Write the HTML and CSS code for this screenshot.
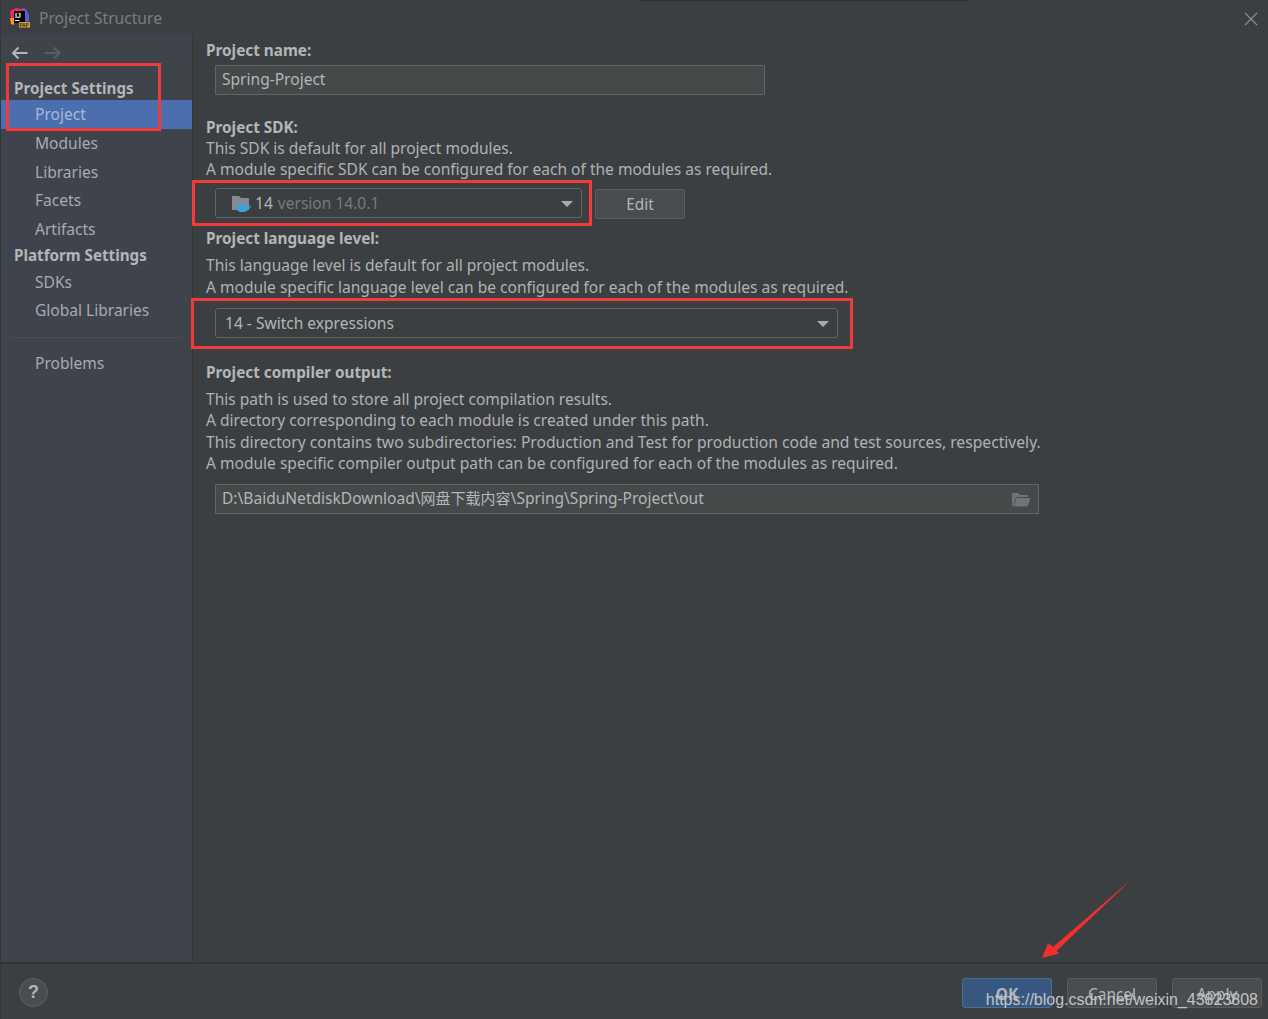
FILE: index.html
```html
<!DOCTYPE html>
<html lang="en">
<head>
<meta charset="utf-8">
<title>Project Structure</title>
<link rel="stylesheet" href="styles.css">
</head>
<body>
<div class="dialog">
  <header class="titlebar">
    <svg class="app-icon" width="22" height="22" viewBox="0 0 22 22">
      <path d="M1 5 L7 2 L13 3 L15 7 L5 15 L2 13 Z" fill="#f0246b"/>
      <path d="M13 2 L17 3 L20 9 L20 15 L15 16 Z" fill="#5b5fe0"/>
      <path d="M1 12 L5 12 L5 19 L2 18 Z" fill="#f89a1c"/>
      <rect x="5" y="5" width="11" height="12" fill="#000"/>
      <text x="6" y="11.500" class="app-icon-text">IJ</text>
      <rect x="6" y="14" width="4.500" height="1" fill="#fff"/>
      <rect x="10" y="16" width="11" height="5.500" fill="#d9a53c"/>
      <text x="10.500" y="20.800" class="app-icon-pap">PAP</text>
    </svg>
    <span class="title">Project Structure</span>
    <svg class="close" width="14" height="14" viewBox="0 0 14 14"><path d="M1 1 L13 13 M13 1 L1 13" stroke="#8d9092" stroke-width="1.1" fill="none"/></svg>
  </header>
  <div class="shadow-top"></div>
  <div class="body">
    <aside class="sidebar">
      <div class="nav-arrows">
        <svg width="18" height="14" viewBox="0 0 18 14"><path d="M16.500 7 H2 M7.500 1.500 L2 7 L7.500 12.500" stroke="#b4b6b8" stroke-width="2" fill="none"/></svg>
        <svg width="18" height="14" viewBox="0 0 18 14"><path d="M1 7 H15.500 M10 1.500 L15.500 7 L10 12.500" stroke="#5b5e60" stroke-width="2" fill="none"/></svg>
      </div>
      <div class="nav-head first">Project Settings</div>
      <div class="nav-item active">Project</div>
      <div class="nav-item">Modules</div>
      <div class="nav-item">Libraries</div>
      <div class="nav-item">Facets</div>
      <div class="nav-item">Artifacts</div>
      <div class="nav-head second">Platform Settings</div>
      <div class="nav-item compact">SDKs</div>
      <div class="nav-item compact">Global Libraries</div>
      <div class="nav-sep"></div>
      <div class="nav-item compact">Problems</div>
    </aside>
    <main class="content">
      <div class="label">Project name:</div>
      <div class="field name-field">Spring-Project</div>

      <div class="label sdk-label">Project SDK:</div>
      <p class="line">This SDK is default for all project modules.</p>
      <p class="line">A module specific SDK can be configured for each of the modules as required.</p>
      <div class="sdk-row">
        <div class="combo sdk-combo">
          <svg class="jdk-icon" width="20" height="18" viewBox="0 0 20 18">
            <path d="M1 1 H8 L10 3 H18 V15 H1 Z" fill="#828b93"/>
            <path d="M6 10 H17 V13 Q17 17 13 17 H10 Q6 17 6 13 Z" fill="#3aa3d8"/>
            <path d="M17 11 H19 V13 H17" stroke="#3aa3d8" fill="none"/>
          </svg>
          <span class="sdk-name">14</span><span class="sdk-version">version 14.0.1</span>
          <span class="caret"></span>
        </div>
        <div class="btn edit-btn">Edit</div>
      </div>

      <div class="label lang-label">Project language level:</div>
      <p class="line lang-first">This language level is default for all project modules.</p>
      <p class="line">A module specific language level can be configured for each of the modules as required.</p>
      <div class="combo lang-combo"><span>14 - Switch expressions</span><span class="caret"></span></div>

      <div class="label out-label">Project compiler output:</div>
      <p class="line out-first">This path is used to store all project compilation results.</p>
      <p class="line">A directory corresponding to each module is created under this path.</p>
      <p class="line wide">This directory contains two subdirectories: Production and Test for production code and test sources, respectively.</p>
      <p class="line">A module specific compiler output path can be configured for each of the modules as required.</p>
      <div class="field out-field">
        <span class="path">D:\BaiduNetdiskDownload\<span class="cjk">网盘下载内容</span>\Spring\Spring-Project\out</span>
        <svg width="20" height="15" viewBox="0 0 20 15"><path d="M1 1 H7 L9 3 H17 V5 H5 L2.500 14 H1 Z" fill="#6e7578"/><path d="M5.500 6 H19.500 L16.500 14.500 H3 Z" fill="#6e7578"/></svg>
      </div>
    </main>
  </div>
  <footer class="footer">
    <div class="help">?</div>
    <div class="actions">
      <div class="btn primary">OK</div>
      <div class="btn">Cancel</div>
      <div class="btn">Apply</div>
    </div>
  </footer>
</div>
<div class="mark mark-1"></div>
<div class="mark mark-2"></div>
<div class="mark mark-3"></div>
<svg class="arrow" width="100" height="90" viewBox="0 0 100 90"><path d="M92 0 L12 69 L7 65 L1 80 L18 75.500 L15.500 73 Z" fill="#f03030"/></svg>
<div class="watermark">https://blog.csdn.net/weixin_43823808</div>
</body>
</html>
```
FILE: styles.css
```css
* { box-sizing: border-box; }
html, body { margin: 0; padding: 0; }
body {
  width: 1268px;
  height: 1019px;
  overflow: hidden;
  position: relative;
  background: #3c3f41;
  color: #bbbbbb;
  font-family: "Noto Sans", "Noto Sans CJK SC", sans-serif;
  font-size: 15.550px;
}
.dialog { height: 1019px; display: flex; flex-direction: column; border-left: 1px solid #35383a; }
.titlebar { height: 35px; display: flex; align-items: center; padding: 0 10px 0 8px; flex: none; }
.app-icon { flex: none; margin-right: 8px; margin-top: -1px; }
.app-icon-text { font: bold 7px "Liberation Sans", sans-serif; fill: #fff; }
.app-icon-pap { font: bold 4.500px "Liberation Sans", sans-serif; fill: #222; }
.title { color: #7a7d80; font-size: 15.600px; }
.close { margin-left: auto; margin-top: 2px; }
.shadow-top { position: absolute; left: 640px; top: 0; width: 330px; height: 1px; background: #2f3133; }
.body { flex: 1; display: flex; min-height: 0; }
.sidebar { width: 192px; flex: none; background: #3e434c; border-right: 1px solid #323436; }
.nav-arrows { height: 31px; display: flex; align-items: center; gap: 15px; padding: 4px 0 0 10px; }
.nav-head { height: 25px; line-height: 25px; padding-left: 13px; font-weight: 700; color: #b4b6b8; font-size: 15.200px; }
.nav-head.first { height: 34px; padding-top: 10px; }
.nav-head.second { height: 24.250px; line-height: 23px; }
.nav-item { height: 28.750px; line-height: 28px; padding-left: 34px; color: #a9abad; }
.nav-item.compact { height: 28px; }
.nav-item.active { background: #4b6eaf; color: #a9b9d3; }
.nav-sep { height: 1px; margin: 13px 0 11px 9px; width: 172px; background: #4a4c4e; }
.content { flex: 1; padding: 5px 0 0 13px; min-width: 0; }
.label { height: 21px; line-height: 21px; font-weight: 700; color: #b4b6b8; font-size: 15.300px; }
.line { margin: 0; height: 21.340px; line-height: 21px; color: #b0b2b4; white-space: nowrap; }
.line.wide { font-size: 15.670px; }
.field { margin: 4px 0 0 9px; height: 30px; background: #45494a; border: 1px solid #646464; padding: 0 6px; line-height: 27px; color: #b4b6b8; display: flex; align-items: center; justify-content: space-between; }
.field > span, .name-field { padding-bottom: 1px; }
.cjk { font-size: 15px; }
.name-field { width: 550px; }
.sdk-label { margin-top: 22px; }
.sdk-row { display: flex; margin: 7px 0 0 9px; gap: 13px; }
.combo { position: relative; height: 30px; border: 1px solid #646464; border-radius: 3px; background: #3c3f41; display: flex; align-items: center; color: #b4b6b8; }
.sdk-combo { width: 367px; padding-left: 15px; }
.jdk-icon { flex: none; margin-right: 4px; margin-top: 2px; }
.sdk-name { margin-right: 5px; }
.sdk-version { color: #777a7c; }
.caret { position: absolute; right: 8px; top: 12px; width: 0; height: 0; border-left: 6px solid transparent; border-right: 6px solid transparent; border-top: 6px solid #a9abad; }
.btn { width: 90px; height: 30px; padding-top: 2px; border: 1px solid #5a5d5e; border-radius: 3px; background: #4a4d4f; color: #b4b6b8; display: flex; align-items: center; justify-content: center; font-size: 15.400px; }
.edit-btn { margin-top: 1px; }
.lang-label { margin-top: 9px; }
.lang-first { margin-top: 6px; height: 22px; }
.lang-combo { width: 623px; margin: 10px 0 0 9px; padding-left: 9px; }
.out-label { margin-top: 24px; }
.out-first { margin-top: 6px; }
.out-field { width: 824px; margin-top: 10px; padding-right: 7px; }
.footer { height: 57px; flex: none; border-top: 2px solid #323436; display: flex; align-items: center; justify-content: space-between; padding: 0 6px 0 18px; }
.help { width: 29px; height: 29px; margin-top: 2px; border-radius: 50%; border: 1px solid #5e6163; background: #4a4d4f; display: flex; align-items: center; justify-content: center; font: 700 18px "Liberation Sans", sans-serif; color: #b4b6b8; }
.actions { display: flex; gap: 15px; margin-top: 3px; }
.btn.primary { background: #365880; border-color: #4c708c; font-weight: 700; }
.mark { position: absolute; border: 3px solid #f33a3a; }
.mark-1 { left: 6px; top: 63px; width: 155px; height: 68px; }
.mark-2 { left: 192px; top: 180px; width: 400px; height: 46px; }
.mark-3 { left: 191px; top: 298px; width: 662px; height: 51px; }
.arrow { position: absolute; left: 1041px; top: 878px; }
.watermark { position: absolute; right: 10px; top: 991px; font: 16px "Liberation Sans", sans-serif; color: #c2c4c6; white-space: nowrap; }
```
